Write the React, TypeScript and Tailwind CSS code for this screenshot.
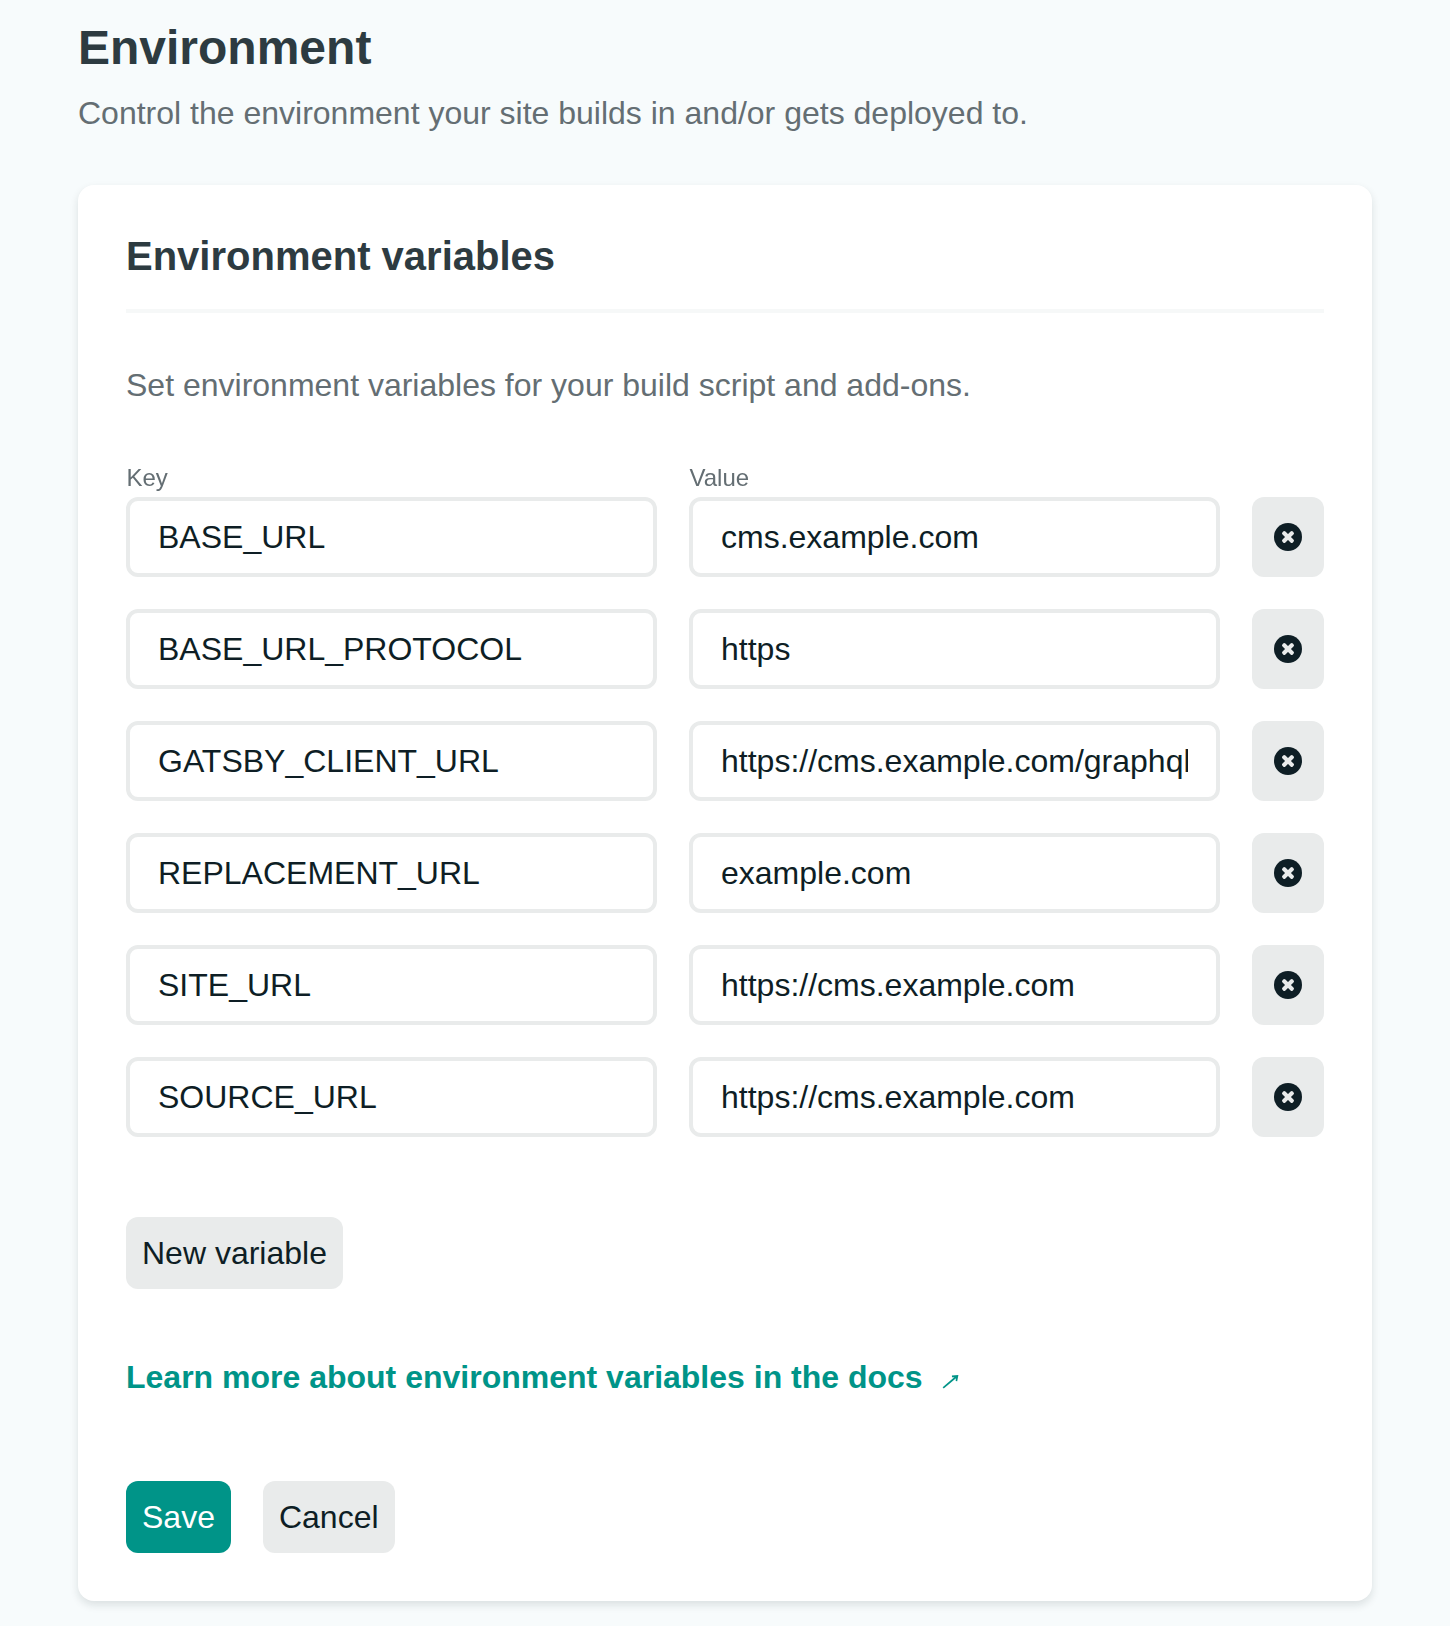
import { useState } from "react";

type Variable = { key: string; value: string };

const initialVariables: Variable[] = [
  { key: "BASE_URL", value: "cms.example.com" },
  { key: "BASE_URL_PROTOCOL", value: "https" },
  { key: "GATSBY_CLIENT_URL", value: "https://cms.example.com/graphql" },
  { key: "REPLACEMENT_URL", value: "example.com" },
  { key: "SITE_URL", value: "https://cms.example.com" },
  { key: "SOURCE_URL", value: "https://cms.example.com" },
];

const fieldClass =
  "block h-20 w-full min-w-0 rounded-xl border-4 border-[#e9ebeb] bg-white px-7 text-[32px] text-[#0e1e25] outline-none";
const buttonClass = "h-[72px] rounded-xl px-4 text-[32px] leading-[72px]";
const labelClass = "pl-[0.5px] will-change-transform";

function RemoveIcon() {
  return (
    <svg width="28" height="28" viewBox="0 0 28 28" aria-hidden="true">
      <circle cx="14" cy="14" r="14" fill="#0e1e25" />
      <g fill="#e9ebeb" transform="rotate(45 14 14)">
        <rect x="6.7" y="11.95" width="14.6" height="4.1" rx="1.6" />
        <rect x="11.95" y="6.7" width="4.1" height="14.6" rx="1.6" />
      </g>
    </svg>
  );
}

function ExternalArrow() {
  return (
    <svg width="18" height="16" viewBox="0 0 18 16" fill="currentColor" aria-hidden="true">
      <path d="M1.2 13.9L14 3" stroke="currentColor" strokeWidth="1.7" />
      <path d="M16.4 1L15.2 7.2L13.7 7L13.9 3.4L10 3.2L9.9 1.5Z" />
    </svg>
  );
}

export default function App() {
  const [variables, setVariables] = useState(initialVariables);

  const update = (index: number, patch: Partial<Variable>) =>
    setVariables(variables.map((v, i) => (i === index ? { ...v, ...patch } : v)));

  return (
    <main className="min-h-[1626px] bg-[#f7fbfc] px-[78px] pt-5 pb-[25px] font-['Liberation_Sans',Arial,sans-serif] text-[32px] leading-[48px] text-[#646e73]">
      <h1 className="text-[48px] leading-[56px] font-bold text-[#2d3b41]">Environment</h1>
      <p className="mt-[13px]">Control the environment your site builds in and/or gets deployed to.</p>

      <section className="mt-12 rounded-2xl bg-white p-12 shadow-[0_4px_8px_0_rgba(14,30,37,0.12)]">
        <h2 className="border-b-4 border-[#f6f8f8] pb-[30px] text-[40px] leading-[46px] font-bold text-[#2d3b41]">
          Environment variables
        </h2>
        <p className="mt-12">Set environment variables for your build script and add-ons.</p>

        <div className="mt-[50px] grid grid-cols-[1fr_1fr_72px] gap-x-8 text-2xl leading-[38px]">
          <span className={labelClass}>Key</span>
          <span className={labelClass}>Value</span>
        </div>
        <div className="flex flex-col gap-8">
          {variables.map((v, i) => (
            <div key={i} className="grid grid-cols-[1fr_1fr_72px] gap-x-8">
              <input
                aria-label="Key"
                spellCheck={false}
                className={fieldClass}
                value={v.key}
                onChange={(e) => update(i, { key: e.target.value })}
              />
              <input
                aria-label="Value"
                spellCheck={false}
                className={fieldClass}
                value={v.value}
                onChange={(e) => update(i, { value: e.target.value })}
              />
              <button
                aria-label="Remove variable"
                className="flex h-20 items-center justify-center rounded-xl bg-[#e9ebeb]"
                onClick={() => setVariables(variables.filter((_, n) => n !== i))}
              >
                <RemoveIcon />
              </button>
            </div>
          ))}
        </div>

        <button
          className={`${buttonClass} mt-20 block bg-[#e9ebeb] text-[#0e1e25]`}
          onClick={() => setVariables([...variables, { key: "", value: "" }])}
        >
          New variable
        </button>

        <a href="#docs" className="mt-16 flex h-12 font-bold text-[#009488]">
          Learn more about environment variables in the docs
          <span className="mt-[21px] ml-[19px]">
            <ExternalArrow />
          </span>
        </a>

        <div className="mt-20 flex gap-8">
          <button className={`${buttonClass} bg-[#009488] text-white`}>Save</button>
          <button className={`${buttonClass} bg-[#e9ebeb] text-[#0e1e25]`}>Cancel</button>
        </div>
      </section>
    </main>
  );
}
